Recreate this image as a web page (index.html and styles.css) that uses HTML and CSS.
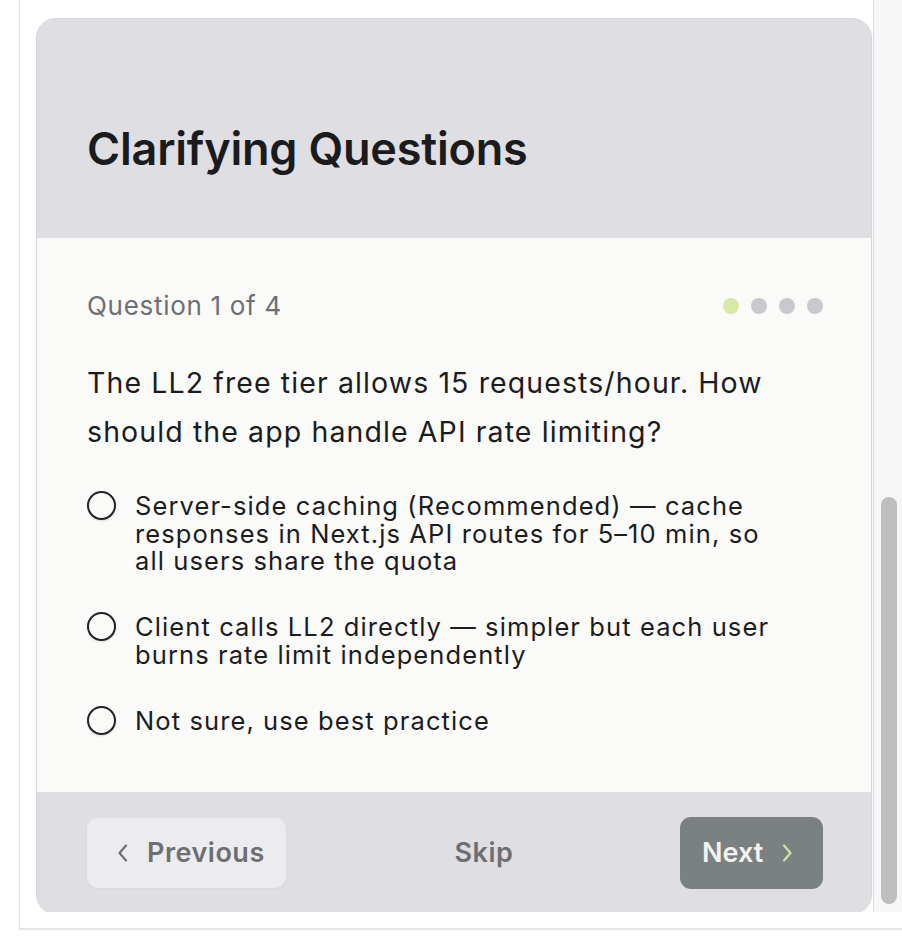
FILE: index.html
```html
<!DOCTYPE html>
<html lang="en">
<head>
<meta charset="utf-8">
<title>Clarifying Questions</title>
<link rel="stylesheet" href="styles.css">
</head>
<body>
<div class="frame">
  <div class="viewport">
    <div class="content">
      <section class="card">
        <header class="card-head">
          <h1 class="title">Clarifying Questions</h1>
        </header>
        <div class="card-body">
          <div class="progress-row">
            <span class="progress-label">Question 1 of 4</span>
            <div class="dots">
              <span class="dot dot-active"></span>
              <span class="dot"></span>
              <span class="dot"></span>
              <span class="dot"></span>
            </div>
          </div>
          <p class="question">The LL2 free tier allows 15 requests/hour. How should the app handle API rate limiting?</p>
          <div class="options">
            <label class="option">
              <span class="radio"></span>
              <span class="option-text">Server-side caching (Recommended) — cache responses in Next.js API routes for 5–10 min, so all users share the quota</span>
            </label>
            <label class="option">
              <span class="radio"></span>
              <span class="option-text">Client calls LL2 directly — simpler but each user burns rate limit independently</span>
            </label>
            <label class="option">
              <span class="radio"></span>
              <span class="option-text">Not sure, use best practice</span>
            </label>
          </div>
        </div>
        <footer class="card-foot">
          <button class="btn btn-prev" type="button">
            <svg class="chev" width="14" height="20" viewBox="0 0 14 20" aria-hidden="true"><path d="M10 2.5 L3.5 10 L10 17.5" fill="none" stroke="currentColor" stroke-width="2.2" stroke-linecap="round" stroke-linejoin="round"/></svg>
            <span>Previous</span>
          </button>
          <button class="btn btn-skip" type="button">Skip</button>
          <button class="btn btn-next" type="button">
            <span>Next</span>
            <svg class="chev chev-next" width="14" height="20" viewBox="0 0 14 20" aria-hidden="true"><path d="M4 2.5 L10.5 10 L4 17.5" fill="none" stroke="currentColor" stroke-width="2.2" stroke-linecap="round" stroke-linejoin="round"/></svg>
          </button>
        </footer>
      </section>
    </div>
    <div class="track">
      <div class="thumb"></div>
    </div>
  </div>
</div>
</body>
</html>
```

FILE: styles.css
```css
* { box-sizing: border-box; }

html, body {
  margin: 0;
  padding: 0;
  background: #ffffff;
}

body {
  font-family: "Inter", "Noto Sans", sans-serif;
  color: #1c1c1e;
}

.frame {
  margin-left: 19px;
  height: 930px;
  border-left: 1px solid #e4e4e6;
  border-bottom: 2px solid #e4e4e6;
}

.viewport {
  display: flex;
  height: 912px;
}

.content {
  flex: 1;
  padding: 18px 1px 0 16px;
  overflow: hidden;
}

.card {
  height: 896px;
  border: 1px solid #d6d6da;
  border-radius: 20px;
  overflow: hidden;
  display: flex;
  flex-direction: column;
  box-shadow: 0 1px 3px rgba(0, 0, 0, 0.06);
  background: #dfdfe3;
}

.card-head {
  height: 219px;
  flex: none;
  background: #dfdfe3;
  padding: 102px 50px 0 50px;
}

.title {
  margin: 0;
  font-size: 45px;
  line-height: 56px;
  font-weight: 600;
  letter-spacing: -0.2px;
  color: #1b1b1d;
}

.card-body {
  height: 554px;
  flex: none;
  background: #fafaf9;
  padding: 52px 48px 0 50px;
}

.progress-row {
  display: flex;
  justify-content: space-between;
  align-items: center;
  height: 32px;
}

.progress-label {
  font-size: 26px;
  line-height: 32px;
  letter-spacing: 0.7px;
  color: #6e6e73;
}

.dots {
  display: flex;
  gap: 12px;
  margin-top: -1px;
}

.dot {
  width: 16px;
  height: 16px;
  border-radius: 50%;
  background: #c9c9cd;
}

.dot-active {
  background: #d8e8a6;
}

.question {
  margin: 36px 0 0 0;
  font-size: 28.5px;
  line-height: 49px;
  letter-spacing: 1.1px;
  color: #1c1c1e;
}

.options {
  margin-top: 36px;
  display: flex;
  flex-direction: column;
  gap: 38.5px;
}

.option {
  display: flex;
  align-items: flex-start;
  gap: 19px;
}

.radio {
  flex: none;
  width: 29px;
  height: 29px;
  margin-top: -1px;
  border: 2px solid #232325;
  border-radius: 50%;
  background: #fafaf9;
  box-shadow: 0 1px 2px rgba(0, 0, 0, 0.12);
}

.option-text {
  max-width: 650px;
  font-size: 25.5px;
  line-height: 27.5px;
  letter-spacing: 1.1px;
  color: #1c1c1e;
}

.card-foot {
  flex: 1;
  background: #dfdfe3;
  display: flex;
  justify-content: space-between;
  align-items: center;
  padding: 0 48px 0 50px;
}

.btn {
  font-family: "Inter", "Noto Sans", sans-serif;
  font-size: 27px;
  font-weight: 600;
  border: none;
  display: flex;
  align-items: center;
  background: transparent;
  padding: 0;
  cursor: pointer;
}

.btn-prev {
  width: 199px;
  height: 70px;
  border-radius: 11px;
  background: #ececef;
  color: #6e6e73;
  padding-left: 29px;
  gap: 17px;
  letter-spacing: 0.5px;
  box-shadow: 0 1px 3px rgba(0, 0, 0, 0.05);
}

.btn-skip {
  color: #6e6e73;
  letter-spacing: 0.5px;
  margin-left: 2px;
}

.btn-next {
  width: 143px;
  height: 72px;
  border-radius: 11px;
  background: #7b8080;
  color: #f2f2f2;
  padding-left: 22px;
  gap: 17px;
}

.chev-next {
  color: #cfe3a6;
}

.track {
  width: 29px;
  flex: none;
  border-left: 1px solid #dcdcde;
  background: #f7f7f7;
  padding: 497px 0 8px 7px;
  display: flex;
}

.thumb {
  width: 16px;
  height: 407px;
  border-radius: 8px;
  background: #bfbfbf;
}
```
